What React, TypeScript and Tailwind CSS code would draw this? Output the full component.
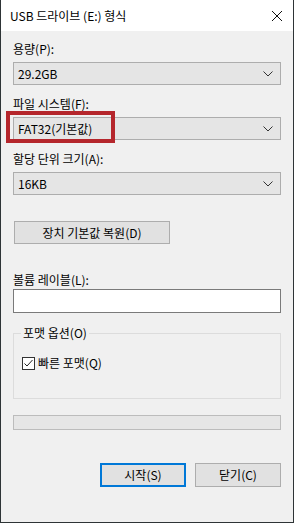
import React from "react";

function Chevron() {
  return (
    <svg width="10" height="6" viewBox="0 0 10 6" className="shrink-0">
      <path d="M0.5 0.5 L5 5 L9.5 0.5" fill="none" stroke="#333" strokeWidth="1" />
    </svg>
  );
}

function Select({ value }: { value: string }) {
  return (
    <div className="flex h-[23px] items-center justify-between border border-[#adadad] bg-[#e5e5e5] pl-[4px] pr-[7px]">
      <span className="leading-[16px]">{value}</span>
      <Chevron />
    </div>
  );
}

export default function App() {
  return (
    <div className="flex h-[523px] w-[294px] flex-col border-x border-b border-[#2e3436] bg-[#f0f0f0] font-['Noto_Sans_CJK_KR','Noto_Sans',sans-serif] text-[12px] text-[#000]">
      <div className="flex h-[31px] items-center justify-between bg-white pl-[9px] pr-[11px]">
        <span className="leading-[16px]">USB 드라이브 (E:) 형식</span>
        <svg width="10" height="10" viewBox="0 0 10 10">
          <path d="M0 0 L10 10 M10 0 L0 10" stroke="#111" strokeWidth="1" />
        </svg>
      </div>
      <div className="flex flex-col px-[12px]">
        <div className="mt-[10px] leading-[16px]">용량(P):</div>
        <div className="mt-[5px]">
          <Select value="29.2GB" />
        </div>
        <div className="mt-[11px] leading-[16px]">파일 시스템(F):</div>
        <div className="relative mt-[5px]">
          <Select value="FAT32(기본값)" />
          <div className="absolute left-[-7px] top-[-6px] h-[32px] w-[109px] border-[4px] border-[#b5262c]" />
        </div>
        <div className="mt-[11px] leading-[16px]">할당 단위 크기(A):</div>
        <div className="mt-[5px]">
          <Select value="16KB" />
        </div>
        <div className="mt-[26px] flex">
          <div className="flex h-[23px] w-[156px] items-center justify-center border border-[#adadad] bg-[#e1e1e1] ml-[1px]">
            <span className="leading-[16px]">장치 기본값 복원(D)</span>
          </div>
        </div>
        <div className="mt-[28px] leading-[16px]">볼륨 레이블(L):</div>
        <div className="mt-[1px] h-[24px] border border-[#7a7a7a] bg-white" />
        <div className="relative mt-[20px] h-[66px] border border-[#dcdcdc]">
          <div className="absolute left-[7px] top-[-9px] bg-[#f0f0f0] px-[2px] leading-[16px]">포맷 옵션(O)</div>
          <div className="ml-[8px] mt-[21px] flex items-center gap-[3px]">
            <div className="flex h-[13px] w-[13px] items-center justify-center border border-[#333] bg-white">
              <svg width="11" height="11" viewBox="0 0 11 11">
                <path d="M1.5 5.5 L4 8 L9.5 2" fill="none" stroke="#222" strokeWidth="1" />
              </svg>
            </div>
            <span className="leading-[16px]">빠른 포맷(Q)</span>
          </div>
        </div>
        <div className="mt-[16px] h-[15px] border border-[#bcbcbc] bg-[#e6e6e6]" />
        <div className="mt-[33px] flex justify-end gap-[9px]">
          <div className="flex h-[24px] w-[86px] items-center justify-center border-2 border-[#0078d7] bg-[#e1e1e1]">
            <span className="leading-[16px]">시작(S)</span>
          </div>
          <div className="flex h-[24px] w-[86px] items-center justify-center border border-[#adadad] bg-[#e1e1e1]">
            <span className="leading-[16px]">닫기(C)</span>
          </div>
        </div>
      </div>
    </div>
  );
}
